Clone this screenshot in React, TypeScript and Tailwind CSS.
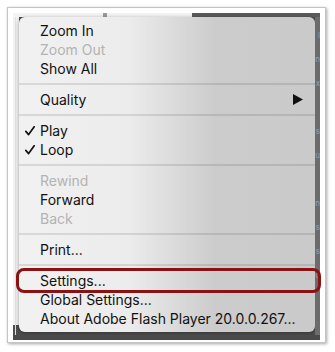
import React from "react";

type Item = { label: string; disabled?: boolean; checked?: boolean; submenu?: boolean } | "sep";

const items: Item[] = [
  { label: "Zoom In" },
  { label: "Zoom Out", disabled: true },
  { label: "Show All" },
  "sep",
  { label: "Quality", submenu: true },
  "sep",
  { label: "Play", checked: true },
  { label: "Loop", checked: true },
  "sep",
  { label: "Rewind", disabled: true },
  { label: "Forward" },
  { label: "Back", disabled: true },
  "sep",
  { label: "Print..." },
  "sep",
  { label: "Settings..." },
  { label: "Global Settings..." },
  { label: "About Adobe Flash Player 20.0.0.267..." },
];

const fragments = ["l", "n", "x", "", "s", "u", "", "n", "s", "s", "o", "", ""];

export default function App() {
  return (
    <div
      className="relative w-[335px] h-[352px] bg-white pt-[7px] pl-[7px]"
      style={{ fontFamily: "Inter, 'Noto Sans', sans-serif" }}
    >
      <div className="w-[319px] h-[336px] border border-[#c4c4c4] bg-white p-[5px] shadow-[1px_1px_3px_rgba(0,0,0,0.35)]">
        <div className="flex flex-col w-[307px] h-[324px] bg-[#4e4e4e]">
          <div className="flex h-[4px] shrink-0">
            <div className="w-[90px] bg-[#f4f4f4]" />
            <div className="w-[4px] bg-[#9a9a9a]" />
            <div className="w-[85px] bg-[#f4f4f4]" />
            <div className="flex-1 bg-[#5a5a5a]" />
          </div>
          <div className="flex flex-1">
            <div className="w-[6px] bg-[linear-gradient(to_bottom,#f2f2f2_0,#f2f2f2_308px,#4e4e4e_308px)] flex">
              <div className="w-[1px] bg-[#e2e2e2] ml-[2px]" />
            </div>
            <div className="w-[296px] h-[315px] rounded-[6px] bg-[linear-gradient(to_right,#f1f1f1_0%,#ececec_37%,#cccccc_66%,#cacaca_100%)] shadow-[0_1px_4px_rgba(0,0,0,0.35)] py-[4px] text-[14px] leading-[19px] text-[#111111]">
              {items.map((it, i) =>
                it === "sep" ? (
                  <div key={i} className="h-[12px] py-[5px]">
                    <div className="h-[2px] bg-[rgba(0,0,0,0.1)]" />
                  </div>
                ) : (
                  <div key={i} className="relative flex items-center h-[19px] pl-[21px] pr-[12px]">
                    {it.checked && (
                      <svg className="absolute left-[6px] top-[5px]" width="10" height="10" viewBox="0 0 10 10">
                        <path d="M0.8 5.4 L3.6 8.6 L9.2 0.8" fill="none" stroke="#111" strokeWidth="1.7" strokeLinecap="round" strokeLinejoin="round" />
                      </svg>
                    )}
                    <span className={it.disabled ? "text-[#b3b3b3]" : ""}>{it.label}</span>
                    {it.submenu && (
                      <svg className="ml-auto" width="10" height="11" viewBox="0 0 10 11">
                        <path d="M0 0 L10 5.5 L0 11 Z" fill="#111" />
                      </svg>
                    )}
                  </div>
                )
              )}
            </div>
            <div className="flex-1 bg-[#6c6c6c] overflow-hidden flex flex-col pt-[6px]">
              {fragments.map((f, i) => (
                <div
                  key={i}
                  className="h-[24px] flex justify-end whitespace-nowrap text-[8px] text-[#8ea2b2] leading-[24px]"
                >
                  {f}
                </div>
              ))}
            </div>
          </div>
          <div className="h-[5px] shrink-0 bg-[#4a4a4a]" />
        </div>
      </div>
      <div className="absolute left-[16px] top-[268px] w-[305px] h-[25px] rounded-[8px] border-[3px] border-[#8b1113]" />
    </div>
  );
}
